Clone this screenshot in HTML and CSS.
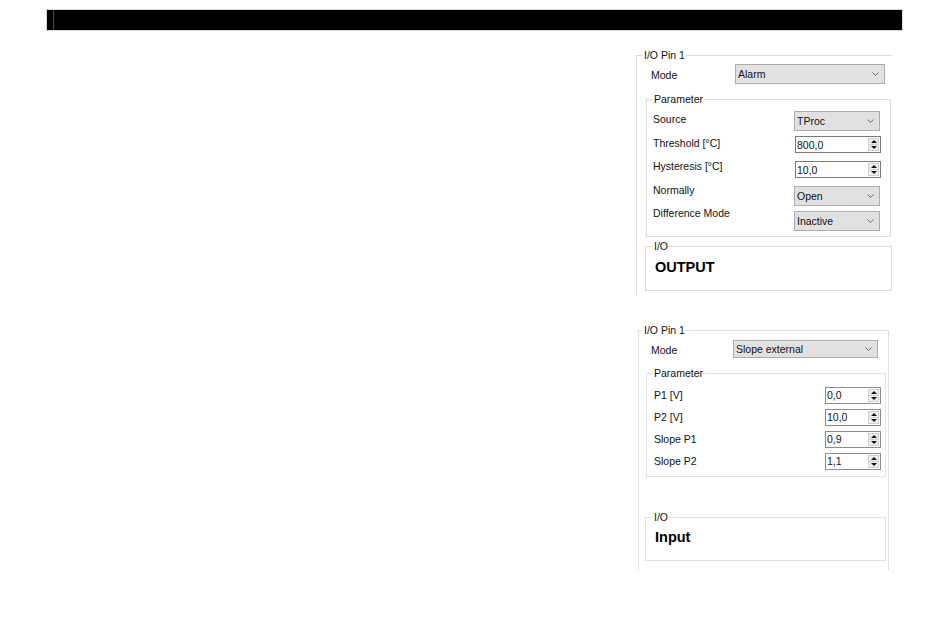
FILE: index.html
```html
<!DOCTYPE html>
<html lang="en">
<head>
    <meta charset="UTF-8">
    <title>I/O Pin Settings</title>
    <link rel="stylesheet" href="styles.css">
</head>
<body>
    <div class="page">
        <div class="titlebar"><span class="titlebar-grip"></span></div>

        <div class="side">
            <!-- Alarm mode -->
            <fieldset class="pin pin-alarm">
                <legend>I/O Pin 1</legend>
                <div class="mode-row">
                    <span class="lbl">Mode</span>
                    <div class="select">Alarm
                        <svg class="chev" width="7" height="4" viewBox="0 0 7 4"><polyline points="0.5,0.5 3.5,3.5 6.5,0.5" fill="none" stroke="#6b6b6b"/></svg>
                    </div>
                </div>

                <fieldset class="group params-alarm">
                    <legend>Parameter</legend>
                    <div class="params">
                        <div class="labels">
                            <div class="lbl">Source</div>
                            <div class="lbl">Threshold [°C]</div>
                            <div class="lbl">Hysteresis [°C]</div>
                            <div class="lbl">Normally</div>
                            <div class="lbl">Difference Mode</div>
                        </div>
                        <div class="controls">
                            <div class="select">TProc
                                <svg class="chev" width="7" height="4" viewBox="0 0 7 4"><polyline points="0.5,0.5 3.5,3.5 6.5,0.5" fill="none" stroke="#6b6b6b"/></svg>
                            </div>
                            <div class="spin"><span class="spin-val">800,0</span><span class="spin-btns"><i class="up"></i><i class="down"></i></span></div>
                            <div class="spin"><span class="spin-val">10,0</span><span class="spin-btns"><i class="up"></i><i class="down"></i></span></div>
                            <div class="select">Open
                                <svg class="chev" width="7" height="4" viewBox="0 0 7 4"><polyline points="0.5,0.5 3.5,3.5 6.5,0.5" fill="none" stroke="#6b6b6b"/></svg>
                            </div>
                            <div class="select">Inactive
                                <svg class="chev" width="7" height="4" viewBox="0 0 7 4"><polyline points="0.5,0.5 3.5,3.5 6.5,0.5" fill="none" stroke="#6b6b6b"/></svg>
                            </div>
                        </div>
                    </div>
                </fieldset>

                <fieldset class="group io io-alarm">
                    <legend>I/O</legend>
                    <div class="io-value">OUTPUT</div>
                </fieldset>
            </fieldset>

            <!-- Slope external mode -->
            <fieldset class="pin pin-slope">
                <legend>I/O Pin 1</legend>
                <div class="mode-row">
                    <span class="lbl">Mode</span>
                    <div class="select">Slope external
                        <svg class="chev" width="7" height="4" viewBox="0 0 7 4"><polyline points="0.5,0.5 3.5,3.5 6.5,0.5" fill="none" stroke="#6b6b6b"/></svg>
                    </div>
                </div>

                <fieldset class="group params-slope">
                    <legend>Parameter</legend>
                    <div class="param-rows">
                        <span class="lbl">P1 [V]</span>
                        <div class="spin"><span class="spin-val">0,0</span><span class="spin-btns"><i class="up"></i><i class="down"></i></span></div>
                        <span class="lbl">P2 [V]</span>
                        <div class="spin"><span class="spin-val">10,0</span><span class="spin-btns"><i class="up"></i><i class="down"></i></span></div>
                        <span class="lbl">Slope P1</span>
                        <div class="spin"><span class="spin-val">0,9</span><span class="spin-btns"><i class="up"></i><i class="down"></i></span></div>
                        <span class="lbl">Slope P2</span>
                        <div class="spin"><span class="spin-val">1,1</span><span class="spin-btns"><i class="up"></i><i class="down"></i></span></div>
                    </div>
                </fieldset>

                <fieldset class="group io io-slope">
                    <legend>I/O</legend>
                    <div class="io-value">Input</div>
                </fieldset>
            </fieldset>
        </div>
    </div>
</body>
</html>
```

FILE: styles.css
```css
* {
    box-sizing: border-box;
}
body {
    margin: 0;
    background: #fff;
    font-family: "Liberation Sans", Arial, sans-serif;
    font-size: 10.5px;
    color: #111;
}
.page {
    padding: 10px 0 0 47px;
}
.titlebar {
    display: flex;
    width: 855px;
    height: 20px;
    background: #000;
    box-shadow: 0 0 0 1px #d6d6d6;
}
.titlebar-grip {
    width: 1px;
    margin-left: 6px;
    background: #4a4a4a;
}
.side {
    display: flex;
    flex-direction: column;
    align-items: flex-start;
    margin: 19px 0 0 589px;
}

fieldset {
    margin: 0;
    padding: 0;
    min-width: 0;
    border: 1px solid #dcdcdc;
}
legend {
    padding: 0 1px;
    font-size: 10.5px;
    line-height: 13px;
}

/* outer pin boxes */
.pin {
    height: 246px;
    border-bottom: none;
}
.pin-alarm {
    width: 256px;
    border-right: none;
}
.pin-alarm > legend {
    margin-left: 6px;
}
.pin-slope {
    width: 251px;
    margin: 29px 0 0 2px;
    border-color: #e2e2e2;
}
.pin-slope > legend {
    margin-left: 4px;
}

.mode-row {
    display: flex;
    align-items: center;
    margin-top: 2px;
}
.pin-alarm .mode-row {
    height: 20px;
    padding-left: 14px;
}
.pin-alarm .mode-row .lbl {
    width: 84px;
    padding-top: 2px;
}
.pin-alarm .mode-row .select {
    width: 150px;
}
.pin-slope .mode-row {
    height: 18px;
    margin-top: 3px;
    padding-left: 12px;
}
.pin-slope .mode-row .lbl {
    width: 82px;
    padding-top: 2px;
}
.pin-slope .mode-row .select {
    width: 145px;
    height: 18px;
}

/* inner groups */
.group > legend {
    margin-left: 6px;
}
.params-alarm {
    width: 245px;
    height: 144px;
    margin: 9px 0 0 9px;
}
.params {
    display: grid;
    grid-template-columns: 1fr 86px;
    padding: 0 9px 0 6px;
}
.labels {
    padding-top: 2px;
}
.labels .lbl {
    line-height: 23.5px;
}
.controls {
    display: grid;
    grid-auto-rows: 25px;
    align-items: start;
    padding-top: 5px;
}

.params-slope {
    width: 240px;
    height: 110px;
    margin: 9px 0 0 7px;
    border-color: #e2e2e2;
}
.param-rows {
    display: grid;
    grid-template-columns: 1fr 56px;
    grid-auto-rows: 22px;
    align-items: center;
    padding: 4px 4px 0 7px;
}

.io {
    height: 51px;
}
.io > legend {
    margin-left: 7px;
}
.io-alarm {
    width: 247px;
    margin: 3px 0 0 8px;
}
.io-alarm .io-value {
    padding-top: 6px;
}
.io-slope {
    width: 241px;
    height: 50px;
    margin: 34px 0 0 6px;
    border-color: #e2e2e2;
}
.io-slope .io-value {
    padding-top: 5px;
}
.io-value {
    padding-left: 9px;
    font-size: 14.5px;
    font-weight: bold;
    line-height: 17px;
    color: #000;
}

/* controls */
.select {
    display: flex;
    align-items: center;
    justify-content: space-between;
    height: 20px;
    padding: 0 5px 0 2px;
    background: #e1e1e1;
    border: 1px solid #adadad;
}
.controls .select {
    margin-left: -1px;
    margin-right: 1px;
}
.chev {
    display: block;
}
.spin {
    display: flex;
    align-items: center;
    height: 17px;
    padding-left: 1px;
    background: #fff;
    border: 1px solid #7a7a7a;
}
.param-rows .spin {
    height: 17px;
    border-color: #8c8c8c;
}
.spin-val {
    flex: 1;
}
.spin-btns {
    display: flex;
    flex-direction: column;
    width: 11px;
    height: 13px;
    margin-right: 1px;
    background: #f0f0f0;
    border: 1px solid #cfcfcf;
}
.spin-btns i {
    flex: 1;
    display: flex;
    align-items: center;
    justify-content: center;
}
.spin-btns i.up {
    border-bottom: 1px solid #cfcfcf;
}
.spin-btns i.up::before,
.spin-btns i.down::before {
    content: "";
    border-left: 3px solid transparent;
    border-right: 3px solid transparent;
}
.spin-btns i.up::before {
    border-bottom: 3px solid #111;
}
.spin-btns i.down::before {
    border-top: 3px solid #111;
}
```
